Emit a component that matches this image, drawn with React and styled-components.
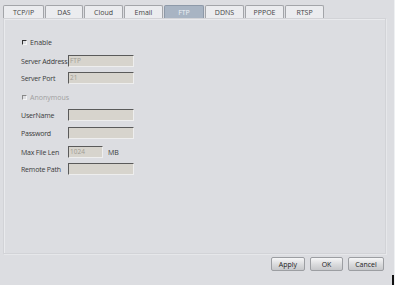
import React from 'react'
import styled, { createGlobalStyle } from 'styled-components'

const Global = createGlobalStyle`
  html, body {
    margin: 0;
    padding: 0;
    background: #dcdde1;
  }
  body {
    font-family: "Open Sans", "Liberation Sans", Arial, sans-serif;
    font-size: 7px;
    color: #3a3a3a;
    white-space: nowrap;
  }
`

const Window = styled.div`
  position: relative;
  width: 395px;
  height: 285px;
  box-sizing: border-box;
  padding: 5px 8px 0 3px;
  display: flex;
  flex-direction: column;
  border-right: 1px solid #eef0f2;
`

const Tabs = styled.div`
  display: flex;
  gap: 1px;
  height: 13px;
`

const Tab = styled.div`
  width: ${p => p.$w}px;
  box-sizing: border-box;
  display: flex;
  align-items: center;
  justify-content: center;
  border: 1px solid ${p => (p.$active ? '#8d99a8' : '#a3a5a9')};
  border-bottom: none;
  border-radius: 2px 2px 0 0;
  background: ${p => (p.$active ? '#a8b4c3' : '#ebecef')};
  color: ${p => (p.$active ? '#eef2f6' : '#444')};
  font-size: 7px;
`

const Panel = styled.div`
  height: 236px;
  box-sizing: border-box;
  border: 1px solid #d2d3d7;
  box-shadow: inset 1px 1px 0 #e9eaed, 1px 1px 0 #e6e7ea;
  padding: 17px 0 0 17px;
  display: flex;
  flex-direction: column;
`

const Row = styled.div`
  display: flex;
  align-items: center;
  height: 12px;
  margin-bottom: ${p => p.$mb ?? 5}px;
  color: ${p => (p.$muted ? '#a0a0a0' : '#3a3a3a')};
`

const Check = styled.span`
  width: 5px;
  height: 5px;
  box-sizing: border-box;
  border-left: 1px solid ${p => (p.$muted ? '#888' : '#333')};
  border-top: 1px solid ${p => (p.$muted ? '#888' : '#333')};
  border-right: 1px solid #f5f5f5;
  border-bottom: 1px solid #f5f5f5;
  margin-right: 3px;
  margin-left: 1px;
`

const Label = styled.span`
  width: 47px;
  flex-shrink: 0;
  letter-spacing: -0.2px;
`

const Input = styled.div`
  width: ${p => p.$w || 66}px;
  flex-shrink: 0;
  height: 12px;
  box-sizing: border-box;
  background: #d7d4cd;
  border-top: 1px solid #5a5a5a;
  border-left: 1px solid #5a5a5a;
  border-right: 1px solid #eeeeee;
  border-bottom: 1px solid #eeeeee;
  color: #a09c94;
  padding-left: 1px;
  font-size: 6.5px;
  line-height: 10px;
`

const Unit = styled.span`
  margin-left: 5px;
`

const Footer = styled.div`
  display: flex;
  justify-content: flex-end;
  gap: 5px;
  padding: 3px 2px 0 0;
`

const Button = styled.div`
  width: ${p => p.$w}px;
  height: 14px;
  box-sizing: border-box;
  display: flex;
  align-items: center;
  justify-content: center;
  border: 1px solid #9c9ea2;
  border-radius: 2px;
  background: linear-gradient(#f6f6f7, #d9dadc 55%, #c6c7ca);
  color: #222;
  font-size: 7px;
`

const Corner = styled.div`
  position: absolute;
  right: 0;
  bottom: 0;
  width: 2px;
  height: 10px;
  background: #111;
`

const tabs = [
  ['TCP/IP', 41],
  ['DAS', 38],
  ['Cloud', 39],
  ['Email', 39],
  ['FTP', 40],
  ['DDNS', 39],
  ['PPPOE', 39],
  ['RTSP', 39],
]

export default function App() {
  return (
    <Window>
      <Global />
      <Tabs>
        {tabs.map(([t, w]) => (
          <Tab key={t} $w={w} $active={t === 'FTP'}>{t}</Tab>
        ))}
      </Tabs>
      <Panel>
        <Row $mb={7}><Check />Enable</Row>
        <Row><Label>Server Address</Label><Input>FTP</Input></Row>
        <Row $mb={7}><Label>Server Port</Label><Input>21</Input></Row>
        <Row $muted $mb={6}><Check $muted />Anonymous</Row>
        <Row $mb={6}><Label>UserName</Label><Input /></Row>
        <Row $mb={7}><Label>Password</Label><Input /></Row>
        <Row $mb={5}><Label>Max File Len</Label><Input $w={35}>1024</Input><Unit>MB</Unit></Row>
        <Row><Label>Remote Path</Label><Input /></Row>
      </Panel>
      <Footer>
        <Button $w={34}>Apply</Button>
        <Button $w={33}>OK</Button>
        <Button $w={36}>Cancel</Button>
      </Footer>
      <Corner />
    </Window>
  )
}
